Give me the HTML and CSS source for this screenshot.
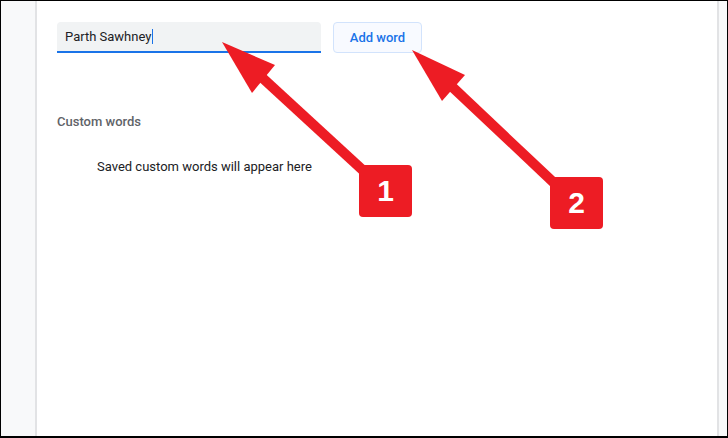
FILE: index.html
```html
<!DOCTYPE html>
<html>
<head>
<meta charset="utf-8">
<link rel="stylesheet" href="styles.css">
</head>
<body>
<div class="frame">
  <div class="sidebar"></div>
  <main class="panel">
    <div class="add-row">
      <div class="input"><span class="value">Parth Sawhney</span><span class="caret"></span></div>
      <button class="add-btn">Add word</button>
    </div>
    <h2 class="section-title">Custom words</h2>
    <p class="empty">Saved custom words will appear here</p>
  </main>
  <div class="gutter"></div>

  <svg class="arrows" width="728" height="438" viewBox="0 0 728 438">
    <line x1="256" y1="72" x2="380" y2="186" stroke="#ed1c24" stroke-width="10"/>
    <polygon points="222,42 275,65 252,93" fill="#ed1c24"/>
    <line x1="446" y1="81" x2="570" y2="198" stroke="#ed1c24" stroke-width="10"/>
    <polygon points="412,50 465,75 442,101" fill="#ed1c24"/>
  </svg>
  <div class="badge badge-1">1</div>
  <div class="badge badge-2">2</div>
</div>
</body>
</html>
```
FILE: styles.css
```css
* { box-sizing: border-box; }
html, body { margin: 0; padding: 0; background: #fff; }
.frame {
  position: relative;
  width: 728px;
  height: 438px;
  border: 1px solid #000;
  border-bottom-width: 2px;
  display: flex;
  overflow: hidden;
  font-family: Roboto, "Liberation Sans", sans-serif;
}
.sidebar {
  width: 34px;
  background: #f8f9fa;
  flex: none;
}
.panel {
  flex: 1;
  background: #fff;
  border-left: 2px solid #e2e3e5;
  border-right: 2px solid #e2e3e5;
  padding: 21px 20px 0 20px;
}
.gutter {
  width: 8px;
  flex: none;
  background: #f8f9fa;
}
.add-row {
  display: flex;
  align-items: flex-start;
  gap: 12px;
}
.input {
  width: 264px;
  height: 31px;
  background: #f1f3f4;
  border-radius: 4px 4px 0 0;
  border-bottom: 2px solid #1a73e8;
  padding: 0 8px;
  display: flex;
  align-items: center;
  font-size: 13px;
  color: #202124;
}
.caret {
  display: inline-block;
  width: 1px;
  height: 15px;
  background: #1a73e8;
  margin-left: 1px;
}
.add-btn {
  width: 89px;
  height: 31px;
  border: 1px solid #d2e3fc;
  background: #f8faff;
  border-radius: 4px;
  color: #1a73e8;
  font-family: Roboto, "Liberation Sans", sans-serif;
  font-size: 13px;
  font-weight: 500;
  padding: 0;
}
.section-title {
  margin: 59px 0 0 0;
  font-size: 13px;
  line-height: 20px;
  font-weight: 500;
  color: #5f6368;
}
.empty {
  margin: 25px 0 0 40px;
  font-size: 13px;
  line-height: 20px;
  color: #202124;
}
.arrows {
  position: absolute;
  left: -1px;
  top: -1px;
}
.badge {
  position: absolute;
  width: 53px;
  height: 52px;
  background: #ed1c24;
  border-radius: 4px;
  color: #fff;
  font-family: "Liberation Sans", Arial, sans-serif;
  font-weight: 700;
  font-size: 30px;
  display: flex;
  align-items: center;
  justify-content: center;
}
.badge-1 { left: 358px; top: 164px; }
.badge-2 { left: 549px; top: 176px; }
```
